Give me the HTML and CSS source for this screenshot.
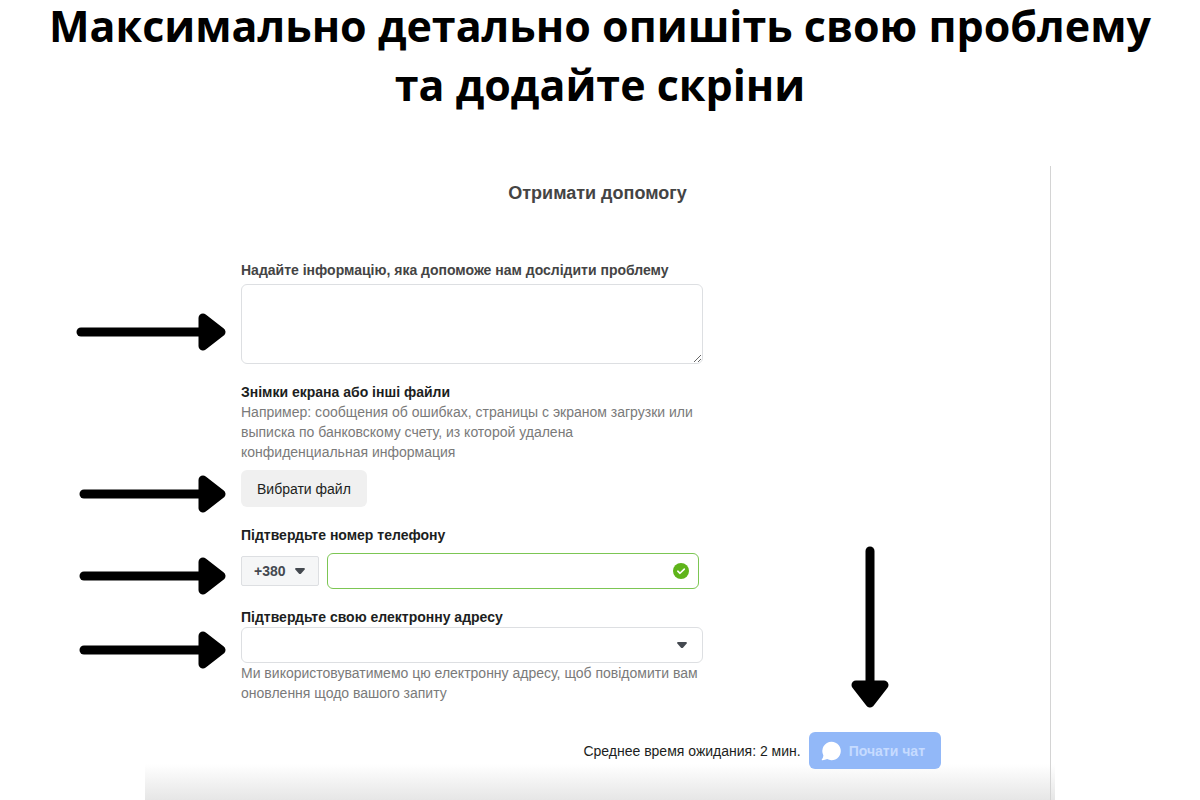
FILE: index.html
```html
<!DOCTYPE html>
<html lang="uk">
<head>
    <meta charset="UTF-8">
    <meta name="viewport" content="width=device-width, initial-scale=1.0">
    <title>Отримати допомогу</title>
    <link rel="stylesheet" href="styles.css">
</head>
<body>
    <svg class="sprite" aria-hidden="true">
        <symbol id="arrow-right" viewBox="0 0 147 38">
            <path d="M5 19H126" stroke="#000" stroke-width="9" stroke-linecap="round"/>
            <path d="M124 5L142 19L124 33Z" stroke="#000" stroke-width="9" stroke-linejoin="round"/>
        </symbol>
        <symbol id="caret" viewBox="0 0 10 6">
            <path d="M1.2 0H8.8C9.8 0 10.2 1 9.5 1.8L6.2 5.4C5.5 6.1 4.5 6.1 3.8 5.4L0.5 1.8C-0.2 1 0.2 0 1.2 0Z" fill="#444950"/>
        </symbol>
    </svg>
    <h1 class="title">Максимально детально опишіть свою проблему та додайте скріни</h1>
    <main class="screen">
        <form class="panel">
            <h2>Отримати допомогу</h2>
            <div class="fields">
                <div class="field">
                    <label class="muted-label" for="details">Надайте інформацію, яка допоможе нам дослідити проблему</label>
                    <div class="control">
                        <svg class="arrow arrow-long" viewBox="0 0 150 38" aria-hidden="true">
                            <path d="M5 19H129" stroke="#000" stroke-width="9" stroke-linecap="round"/>
                            <path d="M127 5L145 19L127 33Z" stroke="#000" stroke-width="9" stroke-linejoin="round"/>
                        </svg>
                        <textarea id="details"></textarea>
                    </div>
                </div>
                <div class="field">
                    <label for="file">Знімки екрана або інші файли</label>
                    <p class="hint hint-file">Например: сообщения об ошибках, страницы с экраном загрузки или выписка по банковскому счету, из которой удалена конфиденциальная информация</p>
                    <div class="control">
                        <svg class="arrow" aria-hidden="true"><use href="#arrow-right"/></svg>
                        <button type="button" class="file-btn" id="file">Вибрати файл</button>
                    </div>
                </div>
                <div class="field">
                    <label for="phone">Підтвердьте номер телефону</label>
                    <div class="control phone-row">
                        <svg class="arrow" aria-hidden="true"><use href="#arrow-right"/></svg>
                        <div class="code">
                            <select aria-label="Код країни">
                                <option>+380</option>
                            </select>
                            <svg class="caret" aria-hidden="true"><use href="#caret"/></svg>
                        </div>
                        <div class="phone">
                            <input type="tel" id="phone">
                            <svg class="check" viewBox="0 0 16 16" aria-hidden="true">
                                <circle cx="8" cy="8" r="8" fill="#5fb41a"/>
                                <path d="M4.8 8.2L7 10.3L11.3 6.1" fill="none" stroke="#fff" stroke-width="1.6" stroke-linecap="round" stroke-linejoin="round"/>
                            </svg>
                        </div>
                    </div>
                </div>
                <div class="field">
                    <label for="email">Підтвердьте свою електронну адресу</label>
                    <div class="control">
                        <svg class="arrow" aria-hidden="true"><use href="#arrow-right"/></svg>
                        <select id="email" class="email">
                            <option></option>
                        </select>
                        <svg class="caret" aria-hidden="true"><use href="#caret"/></svg>
                    </div>
                    <p class="hint">Ми використовуватимемо цю електронну адресу, щоб повідомити вам оновлення щодо вашого запиту</p>
                </div>
            </div>
            <div class="actions">
                <span>Среднее время ожидания: 2 мин.</span>
                <div class="start">
                    <svg class="arrow-down" viewBox="0 0 38 162" aria-hidden="true">
                        <path d="M19 5V140" stroke="#000" stroke-width="9" stroke-linecap="round"/>
                        <path d="M5 139L19 157L33 139Z" stroke="#000" stroke-width="9" stroke-linejoin="round"/>
                    </svg>
                    <button type="submit" class="chat-btn">
                        <svg viewBox="0 0 20 20" aria-hidden="true">
                            <path d="M10.5 0.8A9.2 9.2 0 1 1 6.2 18.1C4.6 18.9 2.8 19.3 1 19.2C0.6 19.2 0.5 18.7 0.8 18.4C1.7 17.3 2.2 15.9 2.4 14.4A9.2 9.2 0 0 1 10.5 0.8Z" fill="#fff"/>
                        </svg>
                        Почати чат
                    </button>
                </div>
            </div>
        </form>
    </main>
</body>
</html>
```
FILE: styles.css
```css
:root {
    --text: #1c1e21;
    --muted: #7a7a7a;
    --border: #dddfe2;
    --green: #7cc653;
    --blue: #92b8f8;
    --radius: 6px;
}
* { box-sizing: border-box; }
body {
    font-family: "Liberation Sans", Arial, sans-serif;
    font-size: 14px;
    line-height: 20px;
    margin: 0;
    background-color: #fff;
    color: var(--text);
    display: flex;
    flex-direction: column;
    min-height: 100vh;
}
.sprite { position: absolute; width: 0; height: 0; }
.title {
    font-family: "Open Sans", "Noto Sans", sans-serif;
    font-size: 43px;
    line-height: 59px;
    font-weight: 700;
    color: #000;
    text-align: center;
    margin: -4px auto 52px;
    padding: 0 40px;
}
.screen {
    flex: 1;
    display: flex;
    width: 100%;
    max-width: 910px;
    margin: 0 auto;
    padding-right: 4px;
    background: linear-gradient(to top, #e6e6e6, #fff) bottom / 100% 36px no-repeat;
}
.panel {
    flex: 1;
    padding: 17px 109px 28px 96px;
    border-right: 1px solid #d4d4d4;
}
h2 { font-size: 18px; line-height: 20px; text-align: center; margin: 0 -109px 57px -96px; color: #444; }
.fields { max-width: 462px; display: flex; flex-direction: column; gap: 18px; }
label { font-weight: 700; display: block; }
.muted-label { color: #444; margin-bottom: 4px; }
.control { position: relative; }
.hint { margin: 0; color: var(--muted); }
.hint-file { margin-bottom: 8px; }
textarea, input, select {
    display: block;
    width: 100%;
    height: 36px;
    border: 1px solid var(--border);
    border-radius: var(--radius);
    background-color: #fff;
    font: inherit;
    color: inherit;
    padding: 0 12px;
    outline: 0;
    appearance: none;
}
textarea { height: 80px; padding: 8px 12px; }
button { height: 37px; border: none; border-radius: var(--radius); font: inherit; cursor: pointer; }
.file-btn { display: block; padding: 0 16px; background-color: #f0f0f0; color: var(--text); }
.phone-row { display: flex; align-items: center; gap: 8px; padding-right: 4px; margin-top: 8px; }
.code { position: relative; width: 78px; }
.code select { height: 30px; border-radius: 2px; background-color: #f5f6f7; color: #444950; font-weight: 700; }
.phone { position: relative; flex: 1; }
.phone input { border-color: var(--green); padding-right: 36px; }
.check { position: absolute; right: 10px; top: 10px; width: 16px; height: 16px; }
.caret { position: absolute; right: 16px; top: calc(50% - 3px); width: 10px; height: 6px; pointer-events: none; }
.code .caret { right: 14px; }
.arrow { position: absolute; right: calc(100% + 15px); top: calc(50% - 14px); width: 147px; height: 38px; }
.arrow-long { width: 150px; top: calc(50% - 11px); }
.actions { display: flex; justify-content: flex-end; align-items: center; gap: 8px; margin-top: 29px; }
.start { position: relative; }
.arrow-down { position: absolute; bottom: calc(100% + 24px); left: 42px; width: 38px; height: 162px; }
.chat-btn { display: flex; align-items: center; gap: 8px; padding: 0 16px 0 12px; background-color: var(--blue); color: #c6dbff; font-weight: 700; }
.chat-btn svg { width: 20px; height: 20px; }
```
